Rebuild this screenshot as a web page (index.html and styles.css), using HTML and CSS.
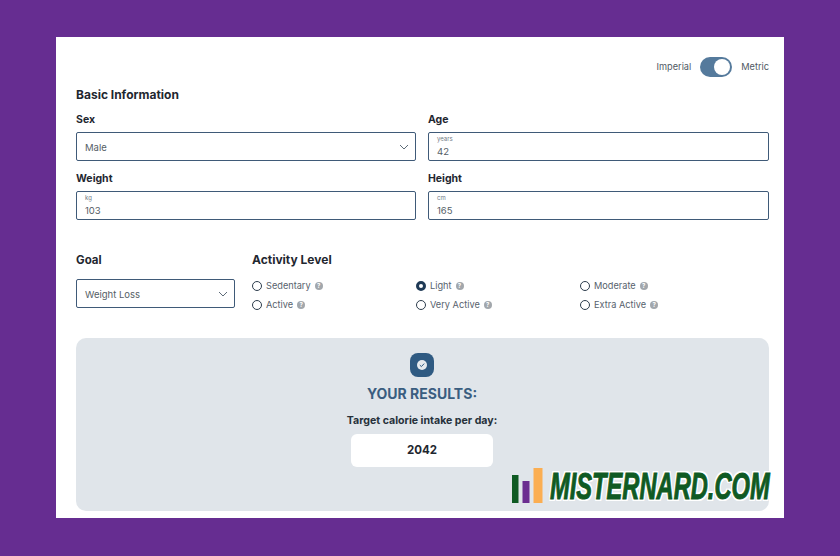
FILE: index.html
```html
<!DOCTYPE html>
<html lang="en">
<head>
<meta charset="utf-8">
<title>Calorie Calculator</title>
<link rel="stylesheet" href="styles.css">
</head>
<body>
<main class="card">
  <div class="units">
    <span class="unit">Imperial</span>
    <span class="toggle"><span class="knob"></span></span>
    <span class="unit">Metric</span>
  </div>
  <h2 class="section">Basic Information</h2>
  <div class="grid">
    <div class="field">
      <div class="label">Sex</div>
      <div class="box select"><span>Male</span>
        <svg class="chev" width="10" height="6" viewBox="0 0 10 6"><path d="M1 1l4 4 4-4" fill="none" stroke="#5d6b78" stroke-width="1"/></svg>
      </div>
    </div>
    <div class="field">
      <div class="label">Age</div>
      <div class="box input"><small>years</small><span>42</span></div>
    </div>
    <div class="field">
      <div class="label">Weight</div>
      <div class="box input"><small>kg</small><span>103</span></div>
    </div>
    <div class="field">
      <div class="label">Height</div>
      <div class="box input"><small>cm</small><span>165</span></div>
    </div>
  </div>
  <div class="lower">
    <div class="goal">
      <div class="label big">Goal</div>
      <div class="box select"><span>Weight Loss</span>
        <svg class="chev" width="10" height="6" viewBox="0 0 10 6"><path d="M1 1l4 4 4-4" fill="none" stroke="#5d6b78" stroke-width="1"/></svg>
      </div>
    </div>
    <div class="activity">
      <div class="label big">Activity Level</div>
      <div class="radios">
        <div class="radio"><i class="dot"></i>Sedentary<b class="help">?</b></div>
        <div class="radio"><i class="dot on"></i>Light<b class="help">?</b></div>
        <div class="radio"><i class="dot"></i>Moderate<b class="help">?</b></div>
        <div class="radio"><i class="dot"></i>Active<b class="help">?</b></div>
        <div class="radio"><i class="dot"></i>Very Active<b class="help">?</b></div>
        <div class="radio"><i class="dot"></i>Extra Active<b class="help">?</b></div>
      </div>
    </div>
  </div>
  <section class="results">
    <div class="badge">
      <svg width="10" height="10" viewBox="0 0 10 10"><circle cx="5" cy="5" r="5" fill="#e6eaee"/><path d="M2.8 5.1l1.6 1.5 2.8-3" fill="none" stroke="#2f5a82" stroke-width="1"/></svg>
    </div>
    <h3 class="title">YOUR RESULTS:</h3>
    <p class="target">Target calorie intake per day:</p>
    <div class="value">2042</div>
  </section>
  <div class="logo">
    <svg class="bars" width="31" height="35" viewBox="0 0 31 35"><rect x="0" y="7" width="6.5" height="28" fill="#0f5a23"/><rect x="10.5" y="13" width="7" height="22" fill="#6b2d90"/><rect x="21.5" y="0" width="9" height="35" fill="#fbae52"/></svg>
    <span class="logotext">MISTERNARD.COM</span>
  </div>
</main>
</body>
</html>
```
FILE: styles.css
```css
* { box-sizing: border-box; }
html, body { margin: 0; height: 100%; }
body {
  background: #662d91;
  padding: 37px 56px 38px;
  font-family: "Inter", "Noto Sans", sans-serif;
  color: #1f2730;
  overflow: hidden;
}
.card {
  position: relative;
  height: 481px;
  background: #fff;
  padding: 20px 15px 7px 20px;
  display: flex;
  flex-direction: column;
}
.units {
  display: flex;
  justify-content: flex-end;
  align-items: center;
  gap: 9px;
  height: 20px;
  font-size: 9.2px;
  color: #4f5963;
}
.unit { padding-bottom: 2px; }
.toggle {
  width: 32px;
  height: 20px;
  border-radius: 10px;
  background: #557a9c;
  display: flex;
  justify-content: flex-end;
  align-items: center;
  padding-right: 2px;
}
.knob { width: 16px; height: 16px; border-radius: 50%; background: #fff; }
.section {
  margin: 11px 0 0;
  font-size: 12px;
  line-height: 14px;
  font-weight: 700;
}
.grid {
  display: grid;
  grid-template-columns: 340px 341px;
  column-gap: 12px;
  row-gap: 11px;
  margin-top: 11px;
}
.label { font-size: 10.5px; line-height: 14px; font-weight: 700; }
.label.big { font-size: 11.5px; }
.activity .label.big { font-size: 12px; }
.box {
  border: 1px solid #3f5a78;
  border-radius: 2px;
  height: 29px;
  margin-top: 5px;
  font-size: 9.5px;
  color: #555e66;
  background: #fff;
}
.select {
  display: flex;
  justify-content: space-between;
  align-items: center;
  padding: 1px 6px 0 8px;
}
.input {
  display: flex;
  flex-direction: column;
  padding: 2px 8px 0;
}
.input small { font-size: 6px; line-height: 7px; color: #6f7a85; }
.input span { line-height: 14px; margin-top: 3px; }
.lower { display: flex; margin-top: 33px; }
.goal { width: 159px; margin-right: 17px; }
.goal .box { margin-top: 12px; }
.activity { flex: 1; }
.radios {
  display: grid;
  grid-template-columns: 164px 164px 1fr;
  row-gap: 5px;
  margin-top: 12px;
}
.radio {
  display: flex;
  align-items: center;
  font-size: 9.2px;
  line-height: 14px;
  color: #57626d;
}
.dot {
  width: 10px;
  height: 10px;
  margin-right: 4px;
  border: 1px solid #2c3c4c;
  border-radius: 50%;
}
.dot.on { border: 3px solid #1f3a56; }
.help {
  width: 8px;
  height: 8px;
  margin-left: 4px;
  border-radius: 50%;
  background: #a2a7ac;
  color: #fff;
  font-size: 6px;
  line-height: 8px;
  text-align: center;
}
.results {
  margin-top: 26px;
  height: 174px;
  border-radius: 10px;
  background: #e0e5ea;
  display: flex;
  flex-direction: column;
  align-items: center;
  padding: 15px 1px 0 0;
}
.badge {
  width: 24px;
  height: 24px;
  border-radius: 8px;
  background: #2f5a82;
  display: flex;
  align-items: center;
  justify-content: center;
}
.title {
  margin: 9px 0 0;
  font-size: 14px;
  line-height: 16px;
  font-weight: 700;
  color: #3a5d80;
}
.target {
  margin: 12px 0 0;
  font-size: 10.6px;
  line-height: 14px;
  font-weight: 700;
  color: #27313b;
}
.value {
  width: 142px;
  height: 33px;
  margin-top: 6px;
  border-radius: 6px;
  background: #fff;
  font-size: 11.5px;
  font-weight: 700;
  line-height: 33px;
  text-align: center;
  color: #1f2730;
}
.logo {
  position: absolute;
  left: 456px;
  top: 431px;
  display: flex;
  align-items: flex-end;
  gap: 7px;
  width: 262px;
  height: 35px;
}
.bars { flex: none; }
.logotext {
  display: block;
  flex: none;
  width: 345px;
  margin-bottom: -1px;
  font-family: "Liberation Sans", sans-serif;
  font-size: 37px;
  line-height: 35px;
  font-weight: 700;
  font-style: italic;
  color: #0f5a23;
  white-space: nowrap;
  -webkit-text-stroke: 1px #0f5a23;
  text-shadow: 2px 0 0 #fff, -2px 0 0 #fff, 0 2px 0 #fff, 0 -2px 0 #fff, 2px 2px 0 #fff, -2px -2px 0 #fff, 2px -2px 0 #fff, -2px 2px 0 #fff;
  transform: scaleX(0.64);
  transform-origin: left center;
}
```
